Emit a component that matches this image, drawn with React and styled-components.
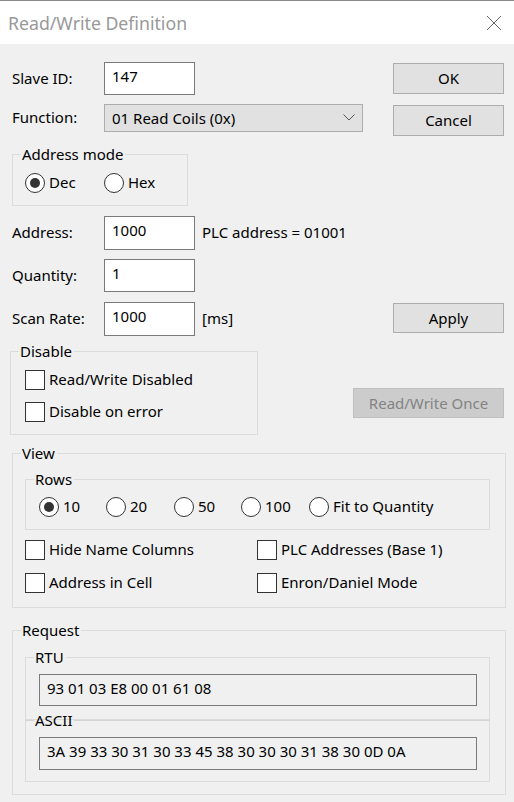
import styled, { createGlobalStyle } from "styled-components";

const GlobalStyle = createGlobalStyle`
  html, body { margin: 0; padding: 0; }
  body {
    width: 514px;
    height: 802px;
    overflow: hidden;
    background: #f0f0f0;
    font-family: "Noto Sans", "Open Sans", sans-serif;
    font-size: 15px;
    color: #000;
  }
  * { box-sizing: border-box; }
`;

const Window = styled.div`
  width: 514px;
  height: 802px;
  display: flex;
  flex-direction: column;
  background: #f0f0f0;
  border-top: 1px solid #8a8a8a;
`;

const TitleBar = styled.div`
  height: 43px;
  flex-shrink: 0;
  background: #fff;
  display: flex;
  align-items: center;
  justify-content: space-between;
  padding: 0 12px 0 8px;
`;

const Title = styled.span`
  font-size: 17.7px;
  color: #999;
`;

const Body = styled.div`
  display: flex;
  flex-direction: column;
  padding: 0 8px 0 12px;
`;

const TopSection = styled.div`
  display: flex;
  gap: 30px;
`;

const LeftCol = styled.div`
  width: 351px;
  display: flex;
  flex-direction: column;
`;

const RightCol = styled.div`
  width: 111px;
  display: flex;
  flex-direction: column;
`;

const Row = styled.div`
  display: flex;
  align-items: center;
  height: ${({ $h }) => $h}px;
  margin-top: ${({ $mt }) => $mt}px;
`;

const Label = styled.span`
  width: 92px;
  flex-shrink: 0;
  padding-bottom: 2px;
`;

const Field = styled.div`
  width: 91px;
  height: 100%;
  background: #fff;
  border: 1px solid #7a7a7a;
  padding: 3px 7px;
  line-height: 20px;
`;

const Note = styled.span`
  margin-left: 7px;
  padding-bottom: 2px;
  white-space: nowrap;
`;

const Select = styled.div`
  width: 259px;
  height: 100%;
  background: #e1e1e1;
  border: 1px solid #adadad;
  display: flex;
  align-items: center;
  justify-content: space-between;
  padding: 0 7px 1px 7px;
`;

const Button = styled.div`
  height: ${({ $h }) => $h || 31}px;
  width: ${({ $w }) => $w || 111}px;
  align-self: flex-end;
  flex-shrink: 0;
  margin-top: ${({ $mt }) => $mt}px;
  background: ${({ $disabled }) => ($disabled ? "#cccccc" : "#e1e1e1")};
  border: 1px solid ${({ $disabled }) => ($disabled ? "#bfbfbf" : "#adadad")};
  color: ${({ $disabled }) => ($disabled ? "#838383" : "#000")};
  display: flex;
  align-items: center;
  justify-content: center;
  padding-bottom: 1px;
  white-space: nowrap;
`;

const Group = styled.fieldset`
  margin: ${({ $mt }) => $mt || 0}px 0 0 ${({ $ml }) => $ml || 0}px;
  padding: 0;
  width: ${({ $w }) => $w}px;
  border: 1px solid #dcdcdc;
  min-width: 0;
  ${({ $thick }) => ($thick ? "border-top-color: #d4d4d4;" : "")}
`;

const Legend = styled.legend`
  margin-left: 8px;
  padding: 0 2px 0 1px;
  line-height: 20px;
  height: 20px;
`;

const GroupInner = styled.div`
  display: flex;
  flex-direction: column;
  padding: ${({ $pad }) => $pad};
  gap: ${({ $gap }) => $gap || 0}px;
`;

const OptionRow = styled.div`
  display: flex;
  align-items: center;
  height: 20px;
`;

const Option = styled.label`
  display: flex;
  align-items: center;
  gap: 4px;
  width: ${({ $w }) => ($w ? `${$w}px` : "auto")};
  flex-shrink: 0;
  height: 20px;
`;

const RadioCircle = styled.span`
  width: 20px;
  height: 20px;
  border-radius: 50%;
  border: 1px solid #333;
  background: #fff;
  display: flex;
  align-items: center;
  justify-content: center;
  flex-shrink: 0;
  &::after {
    content: "";
    width: 10px;
    height: 10px;
    border-radius: 50%;
    background: #333;
    display: ${({ $on }) => ($on ? "block" : "none")};
  }
`;

const CheckBox = styled.span`
  width: 20px;
  height: 20px;
  border: 1px solid #333;
  background: #fff;
  flex-shrink: 0;
`;

const OptText = styled.span`
  padding-bottom: 2px;
  white-space: nowrap;
`;

const CheckGrid = styled.div`
  display: grid;
  grid-template-columns: 232px 1fr;
  row-gap: 13px;
  margin-top: 10px;
`;

const ReadOnlyBox = styled.div`
  width: 438px;
  height: ${({ $h }) => $h}px;
  border: 1px solid #7a7a7a;
  background: #f0f0f0;
  padding: 3px 7px;
  line-height: 20px;
  white-space: nowrap;
`;

function CloseIcon() {
  return (
    <svg width="16" height="16" viewBox="0 0 16 16">
      <path d="M1 1 L15 15 M15 1 L1 15" stroke="#666" strokeWidth="1" fill="none" />
    </svg>
  );
}

function Chevron() {
  return (
    <svg width="12" height="7" viewBox="0 0 12 7">
      <path d="M0.5 0.5 L6 6 L11.5 0.5" stroke="#555" strokeWidth="1" fill="none" />
    </svg>
  );
}

function Radio({ on, children, w }) {
  return (
    <Option $w={w}>
      <RadioCircle $on={on} />
      <OptText>{children}</OptText>
    </Option>
  );
}

function Check({ children }) {
  return (
    <Option>
      <CheckBox />
      <OptText>{children}</OptText>
    </Option>
  );
}

export default function App() {
  return (
    <>
      <GlobalStyle />
      <Window>
        <TitleBar>
          <Title>Read/Write Definition</Title>
          <CloseIcon />
        </TitleBar>
        <Body>
          <TopSection>
            <LeftCol>
              <Row $h={33} $mt={18}>
                <Label>Slave ID:</Label>
                <Field>147</Field>
              </Row>
              <Row $h={28} $mt={9}>
                <Label>Function:</Label>
                <Select>
                  <span>01 Read Coils (0x)</span>
                  <Chevron />
                </Select>
              </Row>
              <Group $w={176} $mt={12}>
                <Legend>Address mode</Legend>
                <GroupInner $pad="9px 0 12px 12px">
                  <OptionRow>
                    <Radio on w={79}>Dec</Radio>
                    <Radio>Hex</Radio>
                  </OptionRow>
                </GroupInner>
              </Group>
              <Row $h={34} $mt={10}>
                <Label>Address:</Label>
                <Field>1000</Field>
                <Note>PLC address = 01001</Note>
              </Row>
              <Row $h={33} $mt={9}>
                <Label>Quantity:</Label>
                <Field>1</Field>
              </Row>
              <Row $h={34} $mt={10}>
                <Label>Scan Rate:</Label>
                <Field>1000</Field>
                <Note>[ms]</Note>
              </Row>
              <Group $w={248} $mt={5} $ml={-2}>
                <Legend>Disable</Legend>
                <GroupInner $pad="9px 0 12px 14px" $gap={12}>
                  <Check>Read/Write Disabled</Check>
                  <Check>Disable on error</Check>
                </GroupInner>
              </Group>
            </LeftCol>
            <RightCol>
              <Button $mt={19}>OK</Button>
              <Button $mt={11}>Cancel</Button>
              <Button $mt={167} $h={30}>Apply</Button>
              <Button $mt={55} $h={30} $w={151} $disabled>
                Read/Write Once
              </Button>
            </RightCol>
          </TopSection>

          <Group $w={494} $mt={8}>
            <Legend>View</Legend>
            <GroupInner $pad="6px 0 14px 12px">
              <Group $w={465}>
                <Legend>Rows</Legend>
                <GroupInner $pad="8px 0 12px 13px">
                  <OptionRow>
                    <Radio on w={67}>10</Radio>
                    <Radio w={68}>20</Radio>
                    <Radio w={67}>50</Radio>
                    <Radio w={68}>100</Radio>
                    <Radio>Fit to Quantity</Radio>
                  </OptionRow>
                </GroupInner>
              </Group>
              <CheckGrid>
                <Check>Hide Name Columns</Check>
                <Check>PLC Addresses (Base 1)</Check>
                <Check>Address in Cell</Check>
                <Check>Enron/Daniel Mode</Check>
              </CheckGrid>
            </GroupInner>
          </Group>

          <Group $w={494} $mt={12}>
            <Legend>Request</Legend>
            <GroupInner $pad="7px 0 12px 12px">
              <Group $w={465}>
                <Legend>RTU</Legend>
                <GroupInner $pad="7px 0 13px 13px">
                  <ReadOnlyBox $h={32}>93 01 03 E8 00 01 61 08</ReadOnlyBox>
                </GroupInner>
              </Group>
              <Group $w={465} $mt={-10} $thick>
                <Legend>ASCII</Legend>
                <GroupInner $pad="7px 0 11px 13px">
                  <ReadOnlyBox $h={33}>
                    3A 39 33 30 31 30 33 45 38 30 30 30 31 38 30 0D 0A
                  </ReadOnlyBox>
                </GroupInner>
              </Group>
            </GroupInner>
          </Group>
        </Body>
      </Window>
    </>
  );
}
